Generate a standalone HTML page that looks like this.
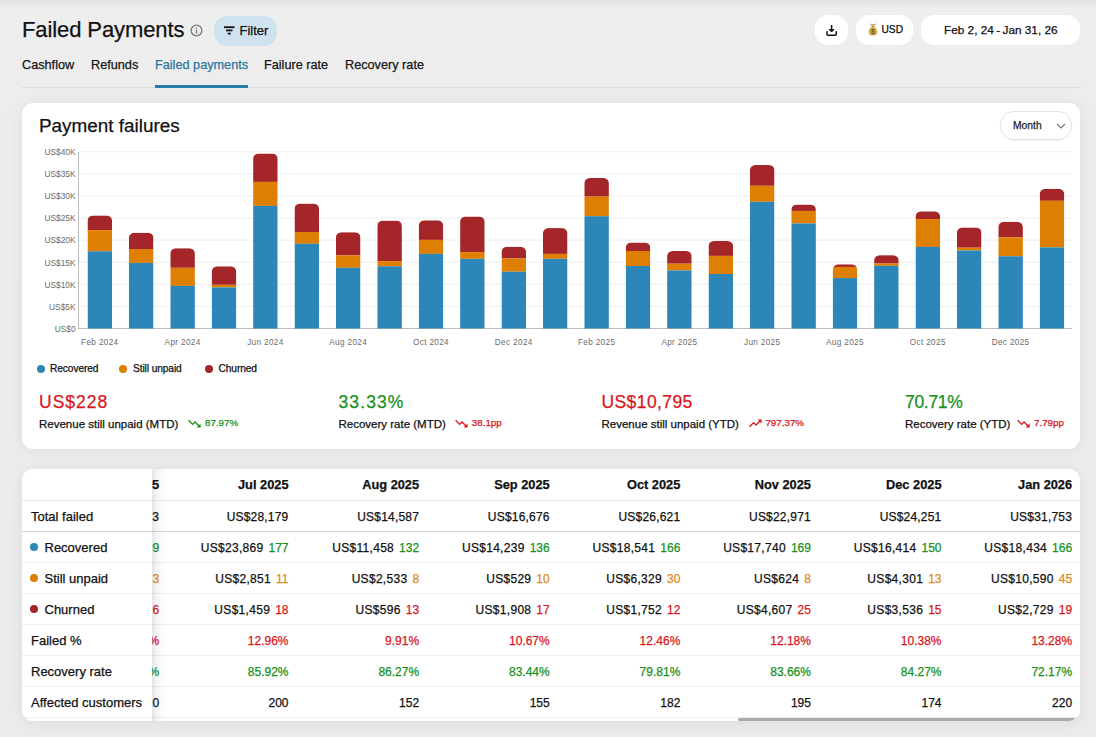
<!DOCTYPE html>
<html><head><meta charset="utf-8">
<style>
*{box-sizing:border-box;margin:0;padding:0}
html,body{width:1096px;height:737px;overflow:hidden}
body{-webkit-text-stroke:0.25px currentColor;background:linear-gradient(#e4e4e4 0px,#eeeeee 9px,#ededed 90px,#ebebeb 737px);font-family:"Liberation Sans",sans-serif;color:#111;position:relative}
.abs{position:absolute;white-space:nowrap}
.title{left:22px;top:14.6px;letter-spacing:-0.1px;font-size:22px;line-height:30px;color:#111}
.info{left:190.3px;top:24.8px;width:11.4px;height:11.4px;border:1.5px solid #7a7a7a;border-radius:50%}
.info:before{content:"";position:absolute;left:3.45px;top:1.5px;width:1.5px;height:1.5px;background:#7a7a7a}
.info:after{content:"";position:absolute;left:3.45px;top:3.7px;width:1.5px;height:4.2px;background:#7a7a7a}
.filter{left:214px;top:16px;width:63px;height:30px;border-radius:13px;background:#cfe3ee}
.filter .t{position:absolute;left:25.5px;top:7px;font-size:13px;line-height:16px;color:#111}
.btn{background:#fff;border-radius:13px;height:30px;top:15px}
.tabs div{position:absolute;top:55.7px;font-size:12.7px;line-height:18px;color:#151515}
.tabline{left:22px;top:86.8px;width:1059px;height:1px;background:#dcdcdc}
.card{background:#fff;border-radius:11px;box-shadow:0 1px 14px rgba(0,0,0,0.07)}
.chart{position:absolute;left:0;top:0}
.leg{top:363px;font-size:10.2px;letter-spacing:-0.1px;line-height:12px;color:#111}
.dot{position:absolute;width:8px;height:8px;border-radius:50%}
.kv{top:390px;font-size:17.5px;line-height:24px}
.kl{top:415.7px;font-size:11.5px;line-height:16px;color:#111}
.kt{top:416px;font-size:9.8px;line-height:14px}
.td{line-height:16px;color:#111}
.red{color:#d9161c}.green{color:#17911b}.orange{color:#dc8a1a}
</style></head><body>
<div class="abs title">Failed Payments</div>
<svg class="abs" style="left:189.5px;top:24px" width="13" height="13" viewBox="0 0 13 13"><circle cx="6.5" cy="6.5" r="5.4" stroke="#7a7a7a" stroke-width="1.3" fill="none"/><rect x="5.85" y="5.6" width="1.3" height="4" fill="#7a7a7a"/><rect x="5.85" y="3.3" width="1.3" height="1.3" fill="#7a7a7a"/></svg>
<div class="abs filter"><svg style="position:absolute;left:10px;top:10px" width="11" height="9" viewBox="0 0 11 9"><rect x="0" y="0.3" width="10.5" height="1.8" fill="#111"/><rect x="2" y="3.5" width="6.5" height="1.8" fill="#111"/><rect x="3.8" y="6.7" width="2.9" height="1.8" fill="#111"/></svg><span class="t">Filter</span></div>
<div class="abs btn" style="left:815px;width:33px"><svg style="position:absolute;left:10.5px;top:9.5px" width="12" height="11" viewBox="0 0 12 11"><path d="M5.6 0.6V5.8" stroke="#111" stroke-width="1.5" fill="none" stroke-linecap="round"/><path d="M3.1 4.5L5.6 7L8.1 4.5Z" fill="#111" stroke="#111" stroke-width="0.8" stroke-linejoin="round"/><path d="M1 6.8V9.2Q1 10.2 2 10.2H9.2Q10.2 10.2 10.2 9.2V6.8" stroke="#111" stroke-width="1.5" fill="none" stroke-linecap="round"/></svg></div>
<div class="abs btn" style="left:856px;width:57px"><svg style="position:absolute;left:11.5px;top:8px" width="10" height="13" viewBox="0 0 10 13"><path d="M1.8 0.9L3.6 1.6H6.4L8.2 0.9" stroke="#8a8a8a" stroke-width="0.7" fill="none"/><path d="M3 1.4H7L6.2 3.8C8.6 5 9.6 7.5 9.3 9.8C9 12 7.4 12.6 5 12.6C2.6 12.6 1 12 0.7 9.8C0.4 7.5 1.4 5 3.8 3.8Z" fill="#d5b04f"/><path d="M3.8 3.6H6.2" stroke="#a88432" stroke-width="0.6"/><text x="5" y="10.9" text-anchor="middle" font-family="Liberation Sans" font-size="7" font-weight="bold" fill="#6e4f22" style="-webkit-text-stroke:0">$</text></svg><span style="position:absolute;left:25.5px;top:8px;font-size:10.2px;line-height:14px;color:#111">USD</span></div>
<div class="abs btn" style="left:921px;width:159px"><span style="position:absolute;left:23px;top:7px;font-size:11.8px;line-height:16px;color:#111">Feb 2, 24&#8201;-&#8201;Jan 31, 26</span></div>
<div class="tabs">
<div style="left:22px">Cashflow</div>
<div style="left:91px">Refunds</div>
<div style="left:155px;color:#2e76a0">Failed payments</div>
<div style="left:264px">Failure rate</div>
<div style="left:345px">Recovery rate</div>
</div>
<div class="abs tabline"></div>
<div class="abs" style="left:155px;top:85.4px;width:93px;height:2.2px;background:#2a7ca8"></div>

<div class="abs card" style="left:22px;top:103px;width:1058px;height:346px"></div>
<div class="abs" style="left:39px;top:113.5px;font-size:18.9px;line-height:24px;color:#111">Payment failures</div>
<div class="abs" style="left:1000px;top:111px;width:72px;height:29px;border:1px solid #e2e2e2;border-radius:14px;box-shadow:0 1px 2px rgba(0,0,0,0.05)"><span style="position:absolute;left:12px;top:7px;font-size:10.3px;line-height:13px;color:#222">Month</span><svg style="position:absolute;left:55px;top:11px" width="10" height="6" viewBox="0 0 10 6"><path d="M1 1L5 5L9 1" stroke="#777" stroke-width="1.2" fill="none"/></svg></div>
<svg class="chart" width="1096" height="360" viewBox="0 0 1096 360">
<defs><clipPath id="c0"><rect x="87.50" y="215.40" width="24.6" height="123.10" rx="5.5"/></clipPath><clipPath id="c1"><rect x="128.90" y="232.70" width="24.6" height="105.80" rx="5.5"/></clipPath><clipPath id="c2"><rect x="170.30" y="248.20" width="24.6" height="90.30" rx="5.5"/></clipPath><clipPath id="c3"><rect x="211.70" y="266.30" width="24.6" height="72.20" rx="5.5"/></clipPath><clipPath id="c4"><rect x="253.10" y="153.50" width="24.6" height="185.00" rx="5.5"/></clipPath><clipPath id="c5"><rect x="294.50" y="203.60" width="24.6" height="134.90" rx="5.5"/></clipPath><clipPath id="c6"><rect x="335.90" y="232.20" width="24.6" height="106.30" rx="5.5"/></clipPath><clipPath id="c7"><rect x="377.30" y="220.60" width="24.6" height="117.90" rx="5.5"/></clipPath><clipPath id="c8"><rect x="418.70" y="220.30" width="24.6" height="118.20" rx="5.5"/></clipPath><clipPath id="c9"><rect x="460.10" y="216.50" width="24.6" height="122.00" rx="5.5"/></clipPath><clipPath id="c10"><rect x="501.50" y="246.70" width="24.6" height="91.80" rx="5.5"/></clipPath><clipPath id="c11"><rect x="542.90" y="228.10" width="24.6" height="110.40" rx="5.5"/></clipPath><clipPath id="c12"><rect x="584.30" y="178.00" width="24.6" height="160.50" rx="5.5"/></clipPath><clipPath id="c13"><rect x="625.70" y="242.50" width="24.6" height="96.00" rx="5.5"/></clipPath><clipPath id="c14"><rect x="667.10" y="251.00" width="24.6" height="87.50" rx="5.5"/></clipPath><clipPath id="c15"><rect x="708.50" y="241.00" width="24.6" height="97.50" rx="5.5"/></clipPath><clipPath id="c16"><rect x="749.90" y="164.90" width="24.6" height="173.60" rx="5.5"/></clipPath><clipPath id="c17"><rect x="791.30" y="204.51" width="24.6" height="133.99" rx="5.5"/></clipPath><clipPath id="c18"><rect x="832.70" y="264.32" width="24.6" height="74.18" rx="5.5"/></clipPath><clipPath id="c19"><rect x="874.10" y="255.13" width="24.6" height="83.37" rx="5.5"/></clipPath><clipPath id="c20"><rect x="915.50" y="211.36" width="24.6" height="127.14" rx="5.5"/></clipPath><clipPath id="c21"><rect x="956.90" y="227.43" width="24.6" height="111.07" rx="5.5"/></clipPath><clipPath id="c22"><rect x="998.30" y="221.80" width="24.6" height="116.70" rx="5.5"/></clipPath><clipPath id="c23"><rect x="1039.70" y="188.79" width="24.6" height="149.71" rx="5.5"/></clipPath></defs>
<line x1="79" y1="306.40" x2="1072" y2="306.40" stroke="#eeeeee" stroke-width="1"/><line x1="79" y1="284.30" x2="1072" y2="284.30" stroke="#eeeeee" stroke-width="1"/><line x1="79" y1="262.20" x2="1072" y2="262.20" stroke="#eeeeee" stroke-width="1"/><line x1="79" y1="240.10" x2="1072" y2="240.10" stroke="#eeeeee" stroke-width="1"/><line x1="79" y1="218.00" x2="1072" y2="218.00" stroke="#eeeeee" stroke-width="1"/><line x1="79" y1="195.90" x2="1072" y2="195.90" stroke="#eeeeee" stroke-width="1"/><line x1="79" y1="173.80" x2="1072" y2="173.80" stroke="#eeeeee" stroke-width="1"/><line x1="79" y1="151.70" x2="1072" y2="151.70" stroke="#eeeeee" stroke-width="1"/>
<line x1="78.5" y1="152" x2="78.5" y2="329" stroke="#bdbdbd" stroke-width="1"/>
<line x1="78" y1="328.5" x2="1072" y2="328.5" stroke="#bdbdbd" stroke-width="1"/>
<g clip-path="url(#c0)"><rect x="87.50" y="215.40" width="24.6" height="14.70" fill="#a52629"/><rect x="87.50" y="230.10" width="24.6" height="21.20" fill="#de7f02"/><rect x="87.50" y="251.30" width="24.6" height="77.20" fill="#2c86b8"/></g><g clip-path="url(#c1)"><rect x="128.90" y="232.70" width="24.6" height="16.30" fill="#a52629"/><rect x="128.90" y="249.00" width="24.6" height="13.90" fill="#de7f02"/><rect x="128.90" y="262.90" width="24.6" height="65.60" fill="#2c86b8"/></g><g clip-path="url(#c2)"><rect x="170.30" y="248.20" width="24.6" height="19.60" fill="#a52629"/><rect x="170.30" y="267.80" width="24.6" height="18.10" fill="#de7f02"/><rect x="170.30" y="285.90" width="24.6" height="42.60" fill="#2c86b8"/></g><g clip-path="url(#c3)"><rect x="211.70" y="266.30" width="24.6" height="18.50" fill="#a52629"/><rect x="211.70" y="284.80" width="24.6" height="2.60" fill="#de7f02"/><rect x="211.70" y="287.40" width="24.6" height="41.10" fill="#2c86b8"/></g><g clip-path="url(#c4)"><rect x="253.10" y="153.50" width="24.6" height="28.40" fill="#a52629"/><rect x="253.10" y="181.90" width="24.6" height="24.00" fill="#de7f02"/><rect x="253.10" y="205.90" width="24.6" height="122.60" fill="#2c86b8"/></g><g clip-path="url(#c5)"><rect x="294.50" y="203.60" width="24.6" height="28.40" fill="#a52629"/><rect x="294.50" y="232.00" width="24.6" height="11.80" fill="#de7f02"/><rect x="294.50" y="243.80" width="24.6" height="84.70" fill="#2c86b8"/></g><g clip-path="url(#c6)"><rect x="335.90" y="232.20" width="24.6" height="23.20" fill="#a52629"/><rect x="335.90" y="255.40" width="24.6" height="12.40" fill="#de7f02"/><rect x="335.90" y="267.80" width="24.6" height="60.70" fill="#2c86b8"/></g><g clip-path="url(#c7)"><rect x="377.30" y="220.60" width="24.6" height="40.50" fill="#a52629"/><rect x="377.30" y="261.10" width="24.6" height="5.20" fill="#de7f02"/><rect x="377.30" y="266.30" width="24.6" height="62.20" fill="#2c86b8"/></g><g clip-path="url(#c8)"><rect x="418.70" y="220.30" width="24.6" height="19.60" fill="#a52629"/><rect x="418.70" y="239.90" width="24.6" height="14.00" fill="#de7f02"/><rect x="418.70" y="253.90" width="24.6" height="74.60" fill="#2c86b8"/></g><g clip-path="url(#c9)"><rect x="460.10" y="216.50" width="24.6" height="35.60" fill="#a52629"/><rect x="460.10" y="252.10" width="24.6" height="6.70" fill="#de7f02"/><rect x="460.10" y="258.80" width="24.6" height="69.70" fill="#2c86b8"/></g><g clip-path="url(#c10)"><rect x="501.50" y="246.70" width="24.6" height="11.80" fill="#a52629"/><rect x="501.50" y="258.50" width="24.6" height="13.20" fill="#de7f02"/><rect x="501.50" y="271.70" width="24.6" height="56.80" fill="#2c86b8"/></g><g clip-path="url(#c11)"><rect x="542.90" y="228.10" width="24.6" height="25.80" fill="#a52629"/><rect x="542.90" y="253.90" width="24.6" height="4.90" fill="#de7f02"/><rect x="542.90" y="258.80" width="24.6" height="69.70" fill="#2c86b8"/></g><g clip-path="url(#c12)"><rect x="584.30" y="178.00" width="24.6" height="18.60" fill="#a52629"/><rect x="584.30" y="196.60" width="24.6" height="19.60" fill="#de7f02"/><rect x="584.30" y="216.20" width="24.6" height="112.30" fill="#2c86b8"/></g><g clip-path="url(#c13)"><rect x="625.70" y="242.50" width="24.6" height="8.50" fill="#a52629"/><rect x="625.70" y="251.00" width="24.6" height="15.00" fill="#de7f02"/><rect x="625.70" y="266.00" width="24.6" height="62.50" fill="#2c86b8"/></g><g clip-path="url(#c14)"><rect x="667.10" y="251.00" width="24.6" height="12.70" fill="#a52629"/><rect x="667.10" y="263.70" width="24.6" height="6.70" fill="#de7f02"/><rect x="667.10" y="270.40" width="24.6" height="58.10" fill="#2c86b8"/></g><g clip-path="url(#c15)"><rect x="708.50" y="241.00" width="24.6" height="14.90" fill="#a52629"/><rect x="708.50" y="255.90" width="24.6" height="18.10" fill="#de7f02"/><rect x="708.50" y="274.00" width="24.6" height="54.50" fill="#2c86b8"/></g><g clip-path="url(#c16)"><rect x="749.90" y="164.90" width="24.6" height="20.90" fill="#a52629"/><rect x="749.90" y="185.80" width="24.6" height="16.00" fill="#de7f02"/><rect x="749.90" y="201.80" width="24.6" height="126.70" fill="#2c86b8"/></g><g clip-path="url(#c17)"><rect x="791.30" y="204.51" width="24.6" height="6.42" fill="#a52629"/><rect x="791.30" y="210.93" width="24.6" height="12.54" fill="#de7f02"/><rect x="791.30" y="223.48" width="24.6" height="105.02" fill="#2c86b8"/></g><g clip-path="url(#c18)"><rect x="832.70" y="264.32" width="24.6" height="2.62" fill="#a52629"/><rect x="832.70" y="266.94" width="24.6" height="11.15" fill="#de7f02"/><rect x="832.70" y="278.08" width="24.6" height="50.42" fill="#2c86b8"/></g><g clip-path="url(#c19)"><rect x="874.10" y="255.13" width="24.6" height="8.40" fill="#a52629"/><rect x="874.10" y="263.52" width="24.6" height="2.33" fill="#de7f02"/><rect x="874.10" y="265.85" width="24.6" height="62.65" fill="#2c86b8"/></g><g clip-path="url(#c20)"><rect x="915.50" y="211.36" width="24.6" height="7.71" fill="#a52629"/><rect x="915.50" y="219.07" width="24.6" height="27.85" fill="#de7f02"/><rect x="915.50" y="246.92" width="24.6" height="81.58" fill="#2c86b8"/></g><g clip-path="url(#c21)"><rect x="956.90" y="227.43" width="24.6" height="20.27" fill="#a52629"/><rect x="956.90" y="247.70" width="24.6" height="2.75" fill="#de7f02"/><rect x="956.90" y="250.44" width="24.6" height="78.06" fill="#2c86b8"/></g><g clip-path="url(#c22)"><rect x="998.30" y="221.80" width="24.6" height="15.56" fill="#a52629"/><rect x="998.30" y="237.35" width="24.6" height="18.92" fill="#de7f02"/><rect x="998.30" y="256.28" width="24.6" height="72.22" fill="#2c86b8"/></g><g clip-path="url(#c23)"><rect x="1039.70" y="188.79" width="24.6" height="12.01" fill="#a52629"/><rect x="1039.70" y="200.79" width="24.6" height="46.60" fill="#de7f02"/><rect x="1039.70" y="247.39" width="24.6" height="81.11" fill="#2c86b8"/></g>
<g font-family="Liberation Sans, sans-serif" font-size="8.4" fill="#6b6b6b"><text x="75.6" y="331.80" text-anchor="end">US$0</text><text x="75.6" y="309.70" text-anchor="end">US$5K</text><text x="75.6" y="287.60" text-anchor="end">US$10K</text><text x="75.6" y="265.50" text-anchor="end">US$15K</text><text x="75.6" y="243.40" text-anchor="end">US$20K</text><text x="75.6" y="221.30" text-anchor="end">US$25K</text><text x="75.6" y="199.20" text-anchor="end">US$30K</text><text x="75.6" y="177.10" text-anchor="end">US$35K</text><text x="75.6" y="155.00" text-anchor="end">US$40K</text></g>
<g font-family="Liberation Sans, sans-serif" font-size="8.2" letter-spacing="0.35" fill="#6b6b6b"><text x="99.80" y="344.7" text-anchor="middle">Feb 2024</text><text x="182.60" y="344.7" text-anchor="middle">Apr 2024</text><text x="265.40" y="344.7" text-anchor="middle">Jun 2024</text><text x="348.20" y="344.7" text-anchor="middle">Aug 2024</text><text x="431.00" y="344.7" text-anchor="middle">Oct 2024</text><text x="513.80" y="344.7" text-anchor="middle">Dec 2024</text><text x="596.60" y="344.7" text-anchor="middle">Feb 2025</text><text x="679.40" y="344.7" text-anchor="middle">Apr 2025</text><text x="762.20" y="344.7" text-anchor="middle">Jun 2025</text><text x="845.00" y="344.7" text-anchor="middle">Aug 2025</text><text x="927.80" y="344.7" text-anchor="middle">Oct 2025</text><text x="1010.60" y="344.7" text-anchor="middle">Dec 2025</text></g>
</svg>
<div class="abs leg" style="left:50px"><span class="dot" style="left:-13px;top:2px;background:#2c86b8"></span>Recovered</div>
<div class="abs leg" style="left:133px"><span class="dot" style="left:-14px;top:2px;background:#de7f02"></span>Still unpaid</div>
<div class="abs leg" style="left:218.5px"><span class="dot" style="left:-13.5px;top:2px;background:#a52629"></span>Churned</div>

<div class="abs kv red" style="left:39px;letter-spacing:1px">US$228</div>
<div class="abs kl" style="left:39px">Revenue still unpaid (MTD)</div>
<div class="abs kv green" style="left:338.5px;letter-spacing:1.1px">33.33%</div>
<div class="abs kl" style="left:338.5px">Recovery rate (MTD)</div>
<div class="abs kv red" style="left:601.5px;letter-spacing:0.4px">US$10,795</div>
<div class="abs kl" style="left:601.5px">Revenue still unpaid (YTD)</div>
<div class="abs kv green" style="left:905px;letter-spacing:-0.3px">70.71%</div>
<div class="abs kl" style="left:905px">Recovery rate (YTD)</div>
<svg class="abs" style="left:188px;top:419px" width="14" height="9" viewBox="0 0 14 9"><path d="M0.6 1.2L4.6 5.4L7 3L11.6 7.6" stroke="#17911b" stroke-width="1.35" fill="none" stroke-linejoin="miter"/><path d="M8.6 8.4H12.6V4.4Z" fill="#17911b"/></svg><div class="abs kt green" style="left:205px">87.97%</div>
<svg class="abs" style="left:454.5px;top:419px" width="14" height="9" viewBox="0 0 14 9"><path d="M0.6 1.2L4.6 5.4L7 3L11.6 7.6" stroke="#d9161c" stroke-width="1.35" fill="none" stroke-linejoin="miter"/><path d="M8.6 8.4H12.6V4.4Z" fill="#d9161c"/></svg><div class="abs kt red" style="left:471.8px">38.1pp</div>
<svg class="abs" style="left:748.5px;top:419px" width="14" height="9" viewBox="0 0 14 9"><path d="M0.6 7.8L4.6 3.6L7 6L11.6 1.4" stroke="#d9161c" stroke-width="1.35" fill="none" stroke-linejoin="miter"/><path d="M8.6 0.6H12.6V4.6Z" fill="#d9161c"/></svg><div class="abs kt red" style="left:765.4px">797.37%</div>
<svg class="abs" style="left:1017px;top:419px" width="14" height="9" viewBox="0 0 14 9"><path d="M0.6 1.2L4.6 5.4L7 3L11.6 7.6" stroke="#d9161c" stroke-width="1.35" fill="none" stroke-linejoin="miter"/><path d="M8.6 8.4H12.6V4.4Z" fill="#d9161c"/></svg><div class="abs kt red" style="left:1034px">7.79pp</div>

<div class="abs card" style="left:22px;top:469px;width:1058px;height:252px;overflow:hidden"></div>
<div class="abs" style="left:22px;top:469px;width:1058px;height:252px;overflow:hidden;border-radius:12px">
<div class="abs" style="left:0;top:31.0px;width:1058px;height:1px;background:#ececec"></div>
<div class="abs" style="left:0;top:61.5px;width:1058px;height:1px;background:#d4d4d4"></div>
<div class="abs" style="left:0;top:92.5px;width:1058px;height:1px;background:#efefef"></div>
<div class="abs" style="left:0;top:123.5px;width:1058px;height:1px;background:#efefef"></div>
<div class="abs" style="left:0;top:154.5px;width:1058px;height:1px;background:#efefef"></div>
<div class="abs" style="left:0;top:185.5px;width:1058px;height:1px;background:#efefef"></div>
<div class="abs" style="left:0;top:216.5px;width:1058px;height:1px;background:#efefef"></div>
<div class="abs" style="left:0;top:248.0px;width:1058px;height:1px;background:#efefef"></div>
<div class="abs td " style="right:920.9px;top:8.0px;font-size:12.8px;font-weight:bold;">Jun 2025</div>
<div class="abs td " style="right:920.9px;top:39.8px;font-size:12px;letter-spacing:0.2px;">US$37,073</div>
<div class="abs td" style="right:920.9px;top:70.6px;font-size:12px;letter-spacing:0.3px">US$28,680<span class="green" style="margin-left:5px;letter-spacing:0">189</span></div>
<div class="abs td" style="right:920.9px;top:101.6px;font-size:12px;letter-spacing:0.3px">US$4,643<span class="orange" style="margin-left:5px;letter-spacing:0">33</span></div>
<div class="abs td" style="right:920.9px;top:132.6px;font-size:12px;letter-spacing:0.3px">US$4,750<span class="red" style="margin-left:5px;letter-spacing:0">26</span></div>
<div class="abs td red" style="right:920.9px;top:163.6px;font-size:12px;">13.06%</div>
<div class="abs td green" style="right:920.9px;top:194.6px;font-size:12px;">85.16%</div>
<div class="abs td " style="right:920.9px;top:225.6px;font-size:12px;">210</div>
<div class="abs td " style="right:791.5px;top:8.0px;font-size:12.8px;font-weight:bold;">Jul 2025</div>
<div class="abs td " style="right:791.5px;top:39.8px;font-size:12px;letter-spacing:0.2px;">US$28,179</div>
<div class="abs td" style="right:791.5px;top:70.6px;font-size:12px;letter-spacing:0.3px">US$23,869<span class="green" style="margin-left:5px;letter-spacing:0">177</span></div>
<div class="abs td" style="right:791.5px;top:101.6px;font-size:12px;letter-spacing:0.3px">US$2,851<span class="orange" style="margin-left:5px;letter-spacing:0">11</span></div>
<div class="abs td" style="right:791.5px;top:132.6px;font-size:12px;letter-spacing:0.3px">US$1,459<span class="red" style="margin-left:5px;letter-spacing:0">18</span></div>
<div class="abs td red" style="right:791.5px;top:163.6px;font-size:12px;">12.96%</div>
<div class="abs td green" style="right:791.5px;top:194.6px;font-size:12px;">85.92%</div>
<div class="abs td " style="right:791.5px;top:225.6px;font-size:12px;">200</div>
<div class="abs td " style="right:660.9px;top:8.0px;font-size:12.8px;font-weight:bold;">Aug 2025</div>
<div class="abs td " style="right:660.9px;top:39.8px;font-size:12px;letter-spacing:0.2px;">US$14,587</div>
<div class="abs td" style="right:660.9px;top:70.6px;font-size:12px;letter-spacing:0.3px">US$11,458<span class="green" style="margin-left:5px;letter-spacing:0">132</span></div>
<div class="abs td" style="right:660.9px;top:101.6px;font-size:12px;letter-spacing:0.3px">US$2,533<span class="orange" style="margin-left:5px;letter-spacing:0">8</span></div>
<div class="abs td" style="right:660.9px;top:132.6px;font-size:12px;letter-spacing:0.3px">US$596<span class="red" style="margin-left:5px;letter-spacing:0">13</span></div>
<div class="abs td red" style="right:660.9px;top:163.6px;font-size:12px;">9.91%</div>
<div class="abs td green" style="right:660.9px;top:194.6px;font-size:12px;">86.27%</div>
<div class="abs td " style="right:660.9px;top:225.6px;font-size:12px;">152</div>
<div class="abs td " style="right:530.3px;top:8.0px;font-size:12.8px;font-weight:bold;">Sep 2025</div>
<div class="abs td " style="right:530.3px;top:39.8px;font-size:12px;letter-spacing:0.2px;">US$16,676</div>
<div class="abs td" style="right:530.3px;top:70.6px;font-size:12px;letter-spacing:0.3px">US$14,239<span class="green" style="margin-left:5px;letter-spacing:0">136</span></div>
<div class="abs td" style="right:530.3px;top:101.6px;font-size:12px;letter-spacing:0.3px">US$529<span class="orange" style="margin-left:5px;letter-spacing:0">10</span></div>
<div class="abs td" style="right:530.3px;top:132.6px;font-size:12px;letter-spacing:0.3px">US$1,908<span class="red" style="margin-left:5px;letter-spacing:0">17</span></div>
<div class="abs td red" style="right:530.3px;top:163.6px;font-size:12px;">10.67%</div>
<div class="abs td green" style="right:530.3px;top:194.6px;font-size:12px;">83.44%</div>
<div class="abs td " style="right:530.3px;top:225.6px;font-size:12px;">155</div>
<div class="abs td " style="right:399.7px;top:8.0px;font-size:12.8px;font-weight:bold;">Oct 2025</div>
<div class="abs td " style="right:399.7px;top:39.8px;font-size:12px;letter-spacing:0.2px;">US$26,621</div>
<div class="abs td" style="right:399.7px;top:70.6px;font-size:12px;letter-spacing:0.3px">US$18,541<span class="green" style="margin-left:5px;letter-spacing:0">166</span></div>
<div class="abs td" style="right:399.7px;top:101.6px;font-size:12px;letter-spacing:0.3px">US$6,329<span class="orange" style="margin-left:5px;letter-spacing:0">30</span></div>
<div class="abs td" style="right:399.7px;top:132.6px;font-size:12px;letter-spacing:0.3px">US$1,752<span class="red" style="margin-left:5px;letter-spacing:0">12</span></div>
<div class="abs td red" style="right:399.7px;top:163.6px;font-size:12px;">12.46%</div>
<div class="abs td green" style="right:399.7px;top:194.6px;font-size:12px;">79.81%</div>
<div class="abs td " style="right:399.7px;top:225.6px;font-size:12px;">182</div>
<div class="abs td " style="right:269.1px;top:8.0px;font-size:12.8px;font-weight:bold;">Nov 2025</div>
<div class="abs td " style="right:269.1px;top:39.8px;font-size:12px;letter-spacing:0.2px;">US$22,971</div>
<div class="abs td" style="right:269.1px;top:70.6px;font-size:12px;letter-spacing:0.3px">US$17,740<span class="green" style="margin-left:5px;letter-spacing:0">169</span></div>
<div class="abs td" style="right:269.1px;top:101.6px;font-size:12px;letter-spacing:0.3px">US$624<span class="orange" style="margin-left:5px;letter-spacing:0">8</span></div>
<div class="abs td" style="right:269.1px;top:132.6px;font-size:12px;letter-spacing:0.3px">US$4,607<span class="red" style="margin-left:5px;letter-spacing:0">25</span></div>
<div class="abs td red" style="right:269.1px;top:163.6px;font-size:12px;">12.18%</div>
<div class="abs td green" style="right:269.1px;top:194.6px;font-size:12px;">83.66%</div>
<div class="abs td " style="right:269.1px;top:225.6px;font-size:12px;">195</div>
<div class="abs td " style="right:138.5px;top:8.0px;font-size:12.8px;font-weight:bold;">Dec 2025</div>
<div class="abs td " style="right:138.5px;top:39.8px;font-size:12px;letter-spacing:0.2px;">US$24,251</div>
<div class="abs td" style="right:138.5px;top:70.6px;font-size:12px;letter-spacing:0.3px">US$16,414<span class="green" style="margin-left:5px;letter-spacing:0">150</span></div>
<div class="abs td" style="right:138.5px;top:101.6px;font-size:12px;letter-spacing:0.3px">US$4,301<span class="orange" style="margin-left:5px;letter-spacing:0">13</span></div>
<div class="abs td" style="right:138.5px;top:132.6px;font-size:12px;letter-spacing:0.3px">US$3,536<span class="red" style="margin-left:5px;letter-spacing:0">15</span></div>
<div class="abs td red" style="right:138.5px;top:163.6px;font-size:12px;">10.38%</div>
<div class="abs td green" style="right:138.5px;top:194.6px;font-size:12px;">84.27%</div>
<div class="abs td " style="right:138.5px;top:225.6px;font-size:12px;">174</div>
<div class="abs td " style="right:7.9px;top:8.0px;font-size:12.8px;font-weight:bold;">Jan 2026</div>
<div class="abs td " style="right:7.9px;top:39.8px;font-size:12px;letter-spacing:0.2px;">US$31,753</div>
<div class="abs td" style="right:7.9px;top:70.6px;font-size:12px;letter-spacing:0.3px">US$18,434<span class="green" style="margin-left:5px;letter-spacing:0">166</span></div>
<div class="abs td" style="right:7.9px;top:101.6px;font-size:12px;letter-spacing:0.3px">US$10,590<span class="orange" style="margin-left:5px;letter-spacing:0">45</span></div>
<div class="abs td" style="right:7.9px;top:132.6px;font-size:12px;letter-spacing:0.3px">US$2,729<span class="red" style="margin-left:5px;letter-spacing:0">19</span></div>
<div class="abs td red" style="right:7.9px;top:163.6px;font-size:12px;">13.28%</div>
<div class="abs td green" style="right:7.9px;top:194.6px;font-size:12px;">72.17%</div>
<div class="abs td " style="right:7.9px;top:225.6px;font-size:12px;">220</div>
<div class="abs" style="left:130px;top:0;width:14px;height:252px;background:linear-gradient(to right,rgba(0,0,0,0.10),rgba(0,0,0,0.04) 35%,rgba(0,0,0,0))"></div>
<div class="abs" style="left:0;top:0;width:130px;height:252px;background:#fff"></div>
<div class="abs" style="left:0;top:31.0px;width:130px;height:1px;background:#ececec"></div>
<div class="abs" style="left:0;top:61.5px;width:130px;height:1px;background:#d4d4d4"></div>
<div class="abs" style="left:0;top:92.5px;width:130px;height:1px;background:#efefef"></div>
<div class="abs" style="left:0;top:123.5px;width:130px;height:1px;background:#efefef"></div>
<div class="abs" style="left:0;top:154.5px;width:130px;height:1px;background:#efefef"></div>
<div class="abs" style="left:0;top:185.5px;width:130px;height:1px;background:#efefef"></div>
<div class="abs" style="left:0;top:216.5px;width:130px;height:1px;background:#efefef"></div>
<div class="abs" style="left:0;top:248.0px;width:130px;height:1px;background:#efefef"></div>
<div class="abs td" style="left:9px;top:40.3px;font-size:13px">Total failed</div>
<div class="abs" style="left:8px;top:74.1px;width:8px;height:8px;border-radius:50%;background:#2c86b8"></div>
<div class="abs td" style="left:22.5px;top:71.1px;font-size:13px">Recovered</div>
<div class="abs" style="left:8px;top:105.1px;width:8px;height:8px;border-radius:50%;background:#de7f02"></div>
<div class="abs td" style="left:22.5px;top:102.1px;font-size:13px">Still unpaid</div>
<div class="abs" style="left:8px;top:136.1px;width:8px;height:8px;border-radius:50%;background:#a52629"></div>
<div class="abs td" style="left:22.5px;top:133.1px;font-size:13px">Churned</div>
<div class="abs td" style="left:9px;top:164.1px;font-size:13px">Failed %</div>
<div class="abs td" style="left:9px;top:195.1px;font-size:13px">Recovery rate</div>
<div class="abs td" style="left:9px;top:226.1px;font-size:13px">Affected customers</div>
<div class="abs" style="left:715.5px;top:248.5px;width:343px;height:3px;background:#a9a9a9;border-radius:1.5px"></div>
</div>
</body></html>
